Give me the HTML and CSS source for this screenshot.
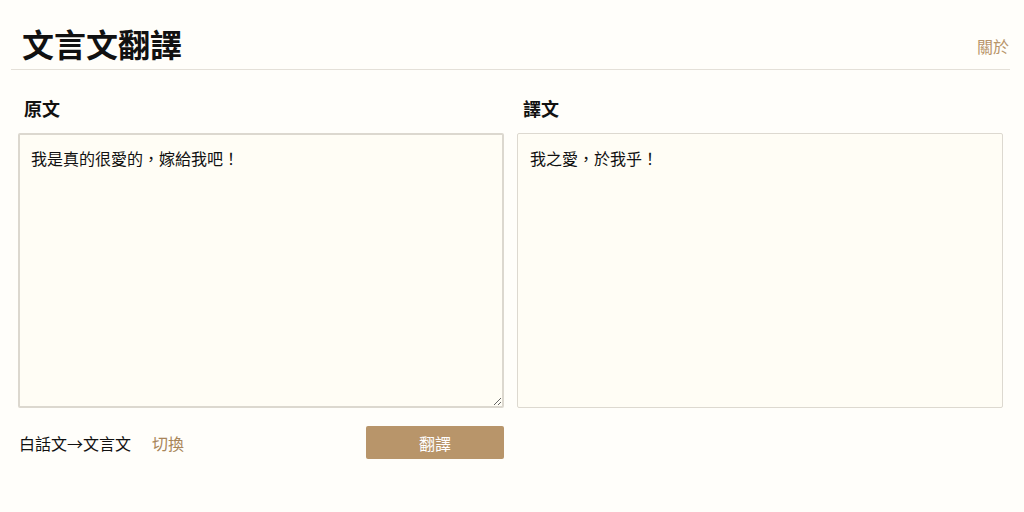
FILE: index.html
```html
<!DOCTYPE html>
<html lang="zh-Hant">
<head>
  <meta charset="UTF-8" />
  <meta name="viewport" content="width=device-width, initial-scale=1.0"/>
  <title>文言文翻譯</title>
  <link rel="stylesheet" href="styles.css">
</head>
<body>
  <header class="header">
    <h1>文言文翻譯</h1>
    <a href="#" class="about">關於</a>
  </header>

  <main class="panes">
    <section class="pane">
      <h2>原文</h2>
      <textarea id="input">我是真的很愛的，嫁給我吧！</textarea>
      <div class="actions">
        <span class="mode">白話文→文言文</span>
        <a href="#" class="switch">切換</a>
        <button class="translate">翻譯</button>
      </div>
    </section>

    <section class="pane">
      <h2>譯文</h2>
      <div class="output">我之愛，於我乎！</div>
    </section>
  </main>
</body>
</html>
```

FILE: styles.css
```css
body {
  font-family: "Noto Sans CJK TC", "Noto Sans", sans-serif;
  background-color: #fffefa;
  color: #111;
  margin: 0;
  padding: 0;
}

.header {
  display: flex;
  justify-content: space-between;
  align-items: flex-end;
  margin: 0 14px 0 11px;
  padding: 22px 1px 5px 11px;
  border-bottom: 1px solid #e4e0d8;
}

h1 {
  margin: 0;
  font-size: 32px;
  line-height: 42px;
  font-weight: 700;
}

.about {
  color: #b8956a;
  text-decoration: none;
  font-size: 16px;
  line-height: 24px;
  margin-bottom: 6px;
}

.panes {
  display: grid;
  grid-template-columns: 486px 486px;
  gap: 13px;
  padding: 0 18px;
}

h2 {
  margin: 25px 0 12px 6px;
  font-size: 18px;
  line-height: 26px;
  font-weight: 700;
}

textarea,
.output {
  display: block;
  width: 100%;
  height: 275px;
  box-sizing: border-box;
  margin: 0;
  padding: 12px;
  font-family: "Noto Sans CJK TC", "Noto Sans", sans-serif;
  font-size: 16px;
  line-height: 24px;
  color: #111;
  background-color: #fffdf5;
  border: 1px solid #ddd9d0;
  border-radius: 2px;
}

textarea {
  border: 2px solid #dcd8cf;
  padding: 11px;
  resize: vertical;
}

.actions {
  display: flex;
  align-items: center;
  margin-top: 18px;
}

.mode {
  font-size: 16px;
  margin-left: 1px;
}

.switch {
  color: #a88559;
  text-decoration: none;
  font-size: 16px;
  margin-left: 21px;
}

.translate {
  margin-left: auto;
  width: 138px;
  height: 33px;
  border: none;
  border-radius: 2px;
  background-color: #b8956a;
  color: #fff;
  font-family: "Noto Sans CJK TC", "Noto Sans", sans-serif;
  font-size: 16px;
  cursor: pointer;
}
```
